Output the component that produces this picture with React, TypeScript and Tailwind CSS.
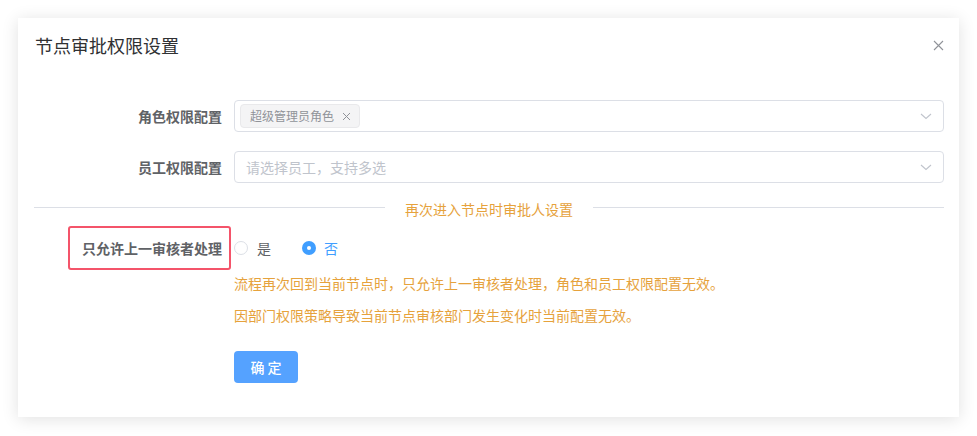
import React from "react";

const font = { fontFamily: '"Noto Sans CJK SC", "Noto Sans", sans-serif' };

function Chevron() {
  return (
    <svg width="12" height="7" viewBox="0 0 12 7" fill="none" className="mr-[11px]">
      <path d="M1 1 L6 5.5 L11 1" stroke="#c0c4cc" strokeWidth="1.1" />
    </svg>
  );
}

export default function App() {
  return (
    <div className="w-[977px] h-[436px] bg-white pt-[18px] pl-[18px]" style={font}>
      <div className="w-[941px] h-[399px] bg-white shadow-[0_2px_16px_rgba(0,0,0,0.12)] flex flex-col">
        {/* header */}
        <div className="flex items-center justify-between pl-[17px] pr-[15px] pt-[15px]">
          <div className="text-[18px] leading-[24px] text-[#303133]">节点审批权限设置</div>
          <svg width="11" height="11" viewBox="0 0 11 11" className="mr-[0px]">
            <path d="M1 1 L10 10 M10 1 L1 10" stroke="#909399" strokeWidth="1.1" />
          </svg>
        </div>

        <div className="pl-[16px] pr-[15px] flex flex-col">
          {/* row 1 */}
          <div className="flex items-center mt-[43px]">
            <div className="w-[200px] pr-[12px] text-right text-[14px] font-bold text-[#606266] leading-[20px]">
              角色权限配置
            </div>
            <div className="flex-1 h-[32px] border border-[#dcdfe6] rounded-[4px] flex items-center justify-between">
              <div className="ml-[5px] h-[24px] bg-[#f4f4f5] border border-[#e9e9eb] rounded-[4px] flex items-center pl-[9px] pr-[8px]">
                <span className="text-[12px] leading-[16px] text-[#909399]">超级管理员角色</span>
                <svg width="9" height="9" viewBox="0 0 9 9" className="ml-[8px]">
                  <path d="M1 1 L8 8 M8 1 L1 8" stroke="#909399" strokeWidth="1" />
                </svg>
              </div>
              <Chevron />
            </div>
          </div>

          {/* row 2 */}
          <div className="flex items-center mt-[19px]">
            <div className="w-[200px] pr-[12px] text-right text-[14px] font-bold text-[#606266] leading-[20px]">
              员工权限配置
            </div>
            <div className="flex-1 h-[32px] border border-[#dcdfe6] rounded-[4px] flex items-center justify-between pl-[11px]">
              <span className="text-[14px] leading-[20px] text-[#c0c4cc]">请选择员工，支持多选</span>
              <Chevron />
            </div>
          </div>

          {/* divider */}
          <div className="flex items-center mt-[12px]">
            <div className="flex-1 h-px bg-[#dcdfe6]" />
            <span className="px-[20px] mt-[4px] text-[14px] leading-[20px] text-[#e6a23c]">再次进入节点时审批人设置</span>
            <div className="flex-1 h-px bg-[#dcdfe6]" />
          </div>

          {/* row 3 */}
          <div className="flex items-center mt-[7px]">
            <div className="w-[200px] flex">
              <div className="ml-[34px] w-[163px] h-[44px] border-2 border-[#f4546a] rounded-[3px] flex items-center justify-end pr-[7px]">
                <span className="text-[14px] font-bold text-[#606266] leading-[20px]">只允许上一审核者处理</span>
              </div>
            </div>
            <div className="flex items-center">
              <span className="w-[14px] h-[14px] rounded-full border border-[#dcdfe6] bg-white" />
              <span className="ml-[9px] text-[14px] leading-[20px] text-[#606266]">是</span>
              <span className="ml-[31px] w-[14px] h-[14px] rounded-full bg-[#409eff] flex items-center justify-center">
                <span className="w-[4px] h-[4px] rounded-full bg-white" />
              </span>
              <span className="ml-[8px] text-[14px] leading-[20px] text-[#409eff]">否</span>
            </div>
          </div>

          {/* notes */}
          <div className="ml-[200px] mt-[3px] text-[14px] leading-[20px] text-[#e6a23c]">
            流程再次回到当前节点时，只允许上一审核者处理，角色和员工权限配置无效。
          </div>
          <div className="ml-[200px] mt-[12px] text-[14px] leading-[20px] text-[#e6a23c]">
            因部门权限策略导致当前节点审核部门发生变化时当前配置无效。
          </div>

          {/* button */}
          <div className="ml-[200px] mt-[26px]">
            <button className="w-[64px] h-[32px] rounded-[4px] bg-[#55a2ff] text-white text-[14px] font-medium leading-[20px] tracking-[3px] pl-[3px]">
              确定
            </button>
          </div>
        </div>
      </div>
    </div>
  );
}
